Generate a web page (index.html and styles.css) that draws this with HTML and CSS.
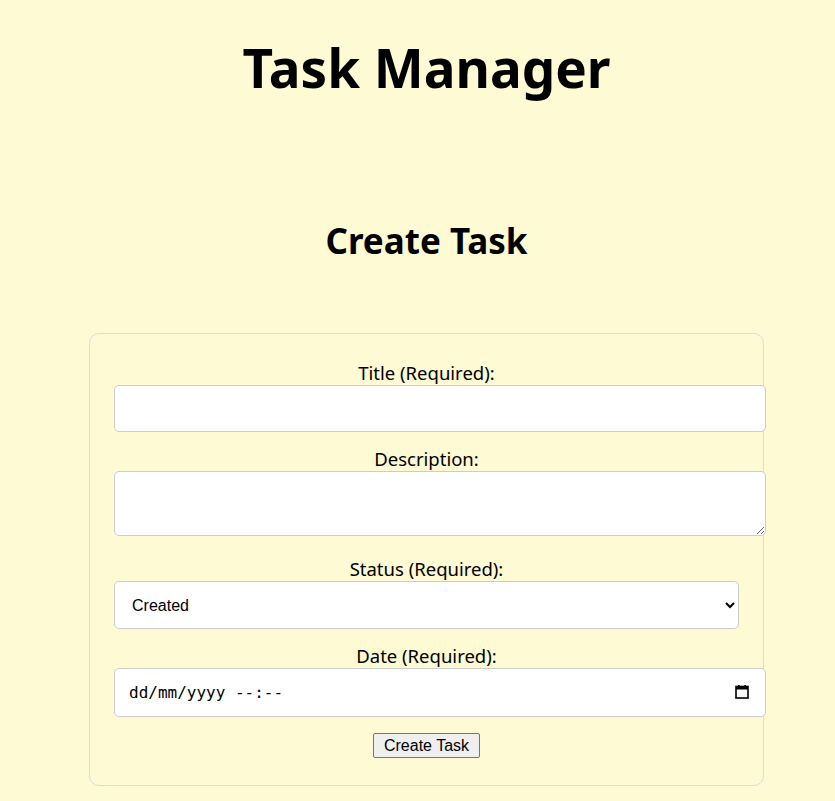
FILE: index.html
```html
<!DOCTYPE html>
<html lang="en">
<head>
<meta charset="utf-8">
<title>Task Manager</title>
<link rel="stylesheet" href="styles.css">
</head>
<body>
<h1 class="page-title">Task Manager</h1>
<h2 class="section-title">Create Task</h2>
<form class="card">
  <label class="field-label" for="title">Title (Required):</label>
  <input class="field" id="title" type="text">
  <label class="field-label" for="desc">Description:</label>
  <textarea class="field field-area" id="desc"></textarea>
  <label class="field-label" for="status">Status (Required):</label>
  <select class="field-select" id="status">
    <option>Created</option>
    <option>In Progress</option>
    <option>Completed</option>
  </select>
  <label class="field-label" for="date">Date (Required):</label>
  <div class="date-wrap">
    <input class="field field-date" id="date" type="text" placeholder="dd/mm/yyyy --:--">
    <svg class="cal-icon" width="14" height="14" viewBox="0 0 14 14" aria-hidden="true">
      <rect x="1" y="1.5" width="12" height="11.5" fill="none" stroke="#000" stroke-width="1.6"/>
      <rect x="1" y="1.5" width="12" height="3" fill="#000"/>
      <rect x="3" y="0" width="1.6" height="2" fill="#000"/>
      <rect x="9.4" y="0" width="1.6" height="2" fill="#000"/>
    </svg>
  </div>
  <button class="submit-btn" type="submit">Create Task</button>
</form>
</body>
</html>
```
FILE: styles.css
```css
html, body {
  background: #fdfad4;
}
body {
  margin: 0;
  padding: 0 8px 20px 26px;
  font-family: "Noto Sans", "Open Sans", sans-serif;
  color: #000;
}
.page-title {
  font-size: 53px;
  line-height: 70px;
  margin: 33px 0 0;
  text-align: center;
  font-weight: 700;
}
.section-title {
  font-size: 35px;
  line-height: 48px;
  margin: 114px 0 0;
  text-align: center;
  font-weight: 700;
}
.card {
  width: 675px;
  box-sizing: border-box;
  margin: 68px auto 0;
  border: 1px solid #dcdcdc;
  border-radius: 10px;
  padding: 26px 24px 27px;
  text-align: center;
}
.field-label {
  display: block;
  font-size: 18.5px;
  line-height: 25px;
}
.field {
  display: block;
  box-sizing: border-box;
  width: 652px;
  padding: 12px;
  border: 1px solid #ccc;
  border-radius: 5px;
  background: #fff;
  font-family: "Liberation Sans", Arial, sans-serif;
  font-size: 16px;
  height: 47px;
  margin: 0 0 14px;
}
.field-area {
  height: 65px;
  resize: vertical;
  margin-bottom: 20px;
}
.field-select {
  display: block;
  box-sizing: border-box;
  width: 100%;
  height: 48px;
  padding: 0 8px 0 13px;
  border: 1px solid #ccc;
  border-radius: 5px;
  background: #fff;
  font-family: "Liberation Sans", Arial, sans-serif;
  font-size: 16px;
  color: #000;
  margin: 0 0 14px;
}
.date-wrap {
  position: relative;
  margin: 0 0 16px;
}
.field-date {
  margin: 0;
  height: 49px;
  padding-left: 14px;
  font-family: "DejaVu Sans Mono", monospace;
  font-size: 16px;
}
.field-date::placeholder {
  color: #000;
  opacity: 1;
}
.cal-icon {
  position: absolute;
  left: 621px;
  top: 17px;
}
.submit-btn {
  font-family: "Liberation Sans", Arial, sans-serif;
  font-size: 16px;
  padding: 2px 10px;
  border: 1px solid #767676;
  border-radius: 2px;
  background: #efefef;
  color: #000;
  height: 25px;
}
```
